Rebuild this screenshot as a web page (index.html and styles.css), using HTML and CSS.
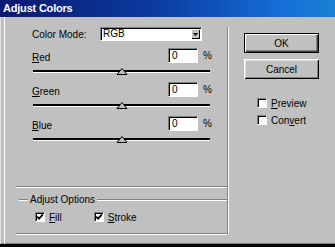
FILE: index.html
```html
<!DOCTYPE html>
<html>
<head>
<meta charset="utf-8">
<link rel="stylesheet" href="styles.css">
</head>
<body>
<div class="window">
  <div class="titlebar">Adjust Colors</div>
  <div class="client">
    <div class="left">
      <div class="adjust">
        <div class="mode-row">
          <span class="mode-label">Color Mode:</span>
          <div class="select"><span class="select-text">RGB</span><span class="drop"><svg width="5" height="3" viewBox="0 0 5 3"><polygon points="0,0 5,0 2.5,3" fill="#000"/></svg></span></div>
        </div>
        <div class="channel">
          <div class="ch-head"><span class="ch-label"><u>R</u>ed</span><span class="field">0</span><span class="pct">%</span></div>
          <div class="track"><svg class="thumb" width="11" height="7" viewBox="0 0 11 7"><polygon points="5.5,0.5 10.5,6.5 0.5,6.5" fill="#c0c0c0" stroke="#000" stroke-width="1"/></svg></div>
        </div>
        <div class="channel">
          <div class="ch-head"><span class="ch-label"><u>G</u>reen</span><span class="field">0</span><span class="pct">%</span></div>
          <div class="track"><svg class="thumb" width="11" height="7" viewBox="0 0 11 7"><polygon points="5.5,0.5 10.5,6.5 0.5,6.5" fill="#c0c0c0" stroke="#000" stroke-width="1"/></svg></div>
        </div>
        <div class="channel">
          <div class="ch-head"><span class="ch-label"><u>B</u>lue</span><span class="field">0</span><span class="pct">%</span></div>
          <div class="track"><svg class="thumb" width="11" height="7" viewBox="0 0 11 7"><polygon points="5.5,0.5 10.5,6.5 0.5,6.5" fill="#c0c0c0" stroke="#000" stroke-width="1"/></svg></div>
        </div>
      </div>
      <div class="opt-head"><span class="legend">Adjust Options</span></div>
      <div class="opt-body">
        <label class="check"><span class="box"><svg width="8" height="8" viewBox="0 0 8 8"><path d="M1.2 3.6 L3.1 5.6 L6.9 1.4" fill="none" stroke="#000" stroke-width="1.8"/></svg></span><span><u>F</u>ill</span></label>
        <label class="check"><span class="box"><svg width="8" height="8" viewBox="0 0 8 8"><path d="M1.2 3.6 L3.1 5.6 L6.9 1.4" fill="none" stroke="#000" stroke-width="1.8"/></svg></span><span><u>S</u>troke</span></label>
      </div>
    </div>
    <div class="right">
      <div class="btn btn-default">OK</div>
      <div class="btn">Cancel</div>
      <div class="checks">
        <label class="check"><span class="box"></span><span><u>P</u>review</span></label>
        <label class="check"><span class="box"></span><span>Con<u>v</u>ert</span></label>
      </div>
    </div>
  </div>
</div>
</body>
</html>
```

FILE: styles.css
```css
html, body {
  margin: 0;
  padding: 0;
  background: #c0c0c0;
}
body {
  font-family: "Liberation Sans", Arial, sans-serif;
  font-size: 10px;
  color: #000;
}
.window {
  width: 335px;
  height: 247px;
  box-sizing: border-box;
  background: #c0c0c0;
  border-bottom: 3px solid #000;
  box-shadow: inset 1px 0 #e0e0e0, inset 0 -1px #808080;
  display: flex;
  flex-direction: column;
  overflow: hidden;
}
.titlebar {
  height: 17px;
  line-height: 17px;
  padding-left: 3px;
  background: linear-gradient(to right, #08186e 0%, #0c3aa0 45%, #1470d8 85%, #1a80d4 100%);
  color: #fff;
  font-weight: bold;
  font-size: 11px;
  letter-spacing: -0.2px;
  flex: none;
}
.client {
  flex: 1;
  display: flex;
  align-items: flex-start;
  margin-left: 4px;
  border-left: 1px solid #fff;
  padding-top: 10px;
  padding-left: 11px;
}
.left {
  width: 212px;
  box-sizing: border-box;
  border-right: 1px solid #808080;
  box-shadow: 1px 0 #fff;
  flex: none;
}
.adjust {
  height: 160px;
  box-sizing: border-box;
  border-bottom: 1px solid #808080;
  box-shadow: 0 1px #fff;
  padding-left: 16px;
}
.mode-row {
  display: flex;
  align-items: center;
  height: 14px;
}
.mode-label {
  width: 68px;
  flex: none;
}
.select {
  width: 102px;
  height: 14px;
  box-sizing: border-box;
  background: #fff;
  border: 1px solid;
  border-color: #808080 #fff #fff #808080;
  box-shadow: inset 1px 1px #000;
  display: flex;
  align-items: center;
  padding-left: 2px;
  padding-right: 1px;
}
.select-text {
  flex: 1;
  line-height: 12px;
}
.drop {
  width: 9px;
  height: 10px;
  box-sizing: border-box;
  background: #c0c0c0;
  box-shadow: inset 1px 1px #fff, inset -1px -1px #000;
  display: flex;
  align-items: center;
  justify-content: center;
}
.drop svg { display: block; }
.channel {
  padding-top: 7px;
  padding-bottom: 3px;
}
.ch-head {
  display: flex;
  align-items: flex-end;
  height: 15px;
}
.ch-label {
  width: 136px;
  flex: none;
  line-height: 11px;
}
.field {
  width: 30px;
  height: 15px;
  box-sizing: border-box;
  background: #fff;
  border: 1px solid;
  border-color: #808080 #fff #fff #808080;
  box-shadow: inset 1px 1px #000;
  padding-left: 3px;
  line-height: 13px;
  flex: none;
}
.pct {
  margin-left: 5px;
  align-self: center;
}
.track {
  position: relative;
  margin-top: 7px;
  margin-left: 1px;
  width: 177px;
  height: 2px;
  background: #000;
  box-shadow: 0 1px #fff;
}
.thumb {
  position: absolute;
  left: 50%;
  top: -2px;
  transform: translateX(-50%);
  display: block;
}
.opt-head {
  display: flex;
  align-items: center;
  height: 12px;
  margin-top: 7px;
}
.opt-head::before,
.opt-head::after {
  content: "";
  height: 0;
  border-top: 1px solid #808080;
  border-bottom: 1px solid #fff;
}
.opt-head::before {
  width: 9px;
  margin-left: 3px;
}
.opt-head::after {
  flex: 1;
}
.legend {
  padding: 0 2px;
  line-height: 12px;
}
.opt-body {
  height: 28px;
  box-sizing: border-box;
  border-bottom: 1px solid #808080;
  box-shadow: 0 1px #fff;
  padding-top: 5px;
  padding-left: 19px;
  display: flex;
  gap: 32px;
}
.check {
  display: flex;
  align-items: center;
  gap: 4px;
  height: 12px;
}
.box {
  width: 10px;
  height: 10px;
  box-sizing: border-box;
  background: #fff;
  border: 1px solid;
  border-color: #808080 #fff #fff #808080;
  box-shadow: inset 1px 1px #000;
  display: flex;
  align-items: center;
  justify-content: center;
  flex: none;
}
.box svg { display: block; }
.right {
  margin-left: 16px;
  width: 75px;
  padding-top: 6px;
  flex: none;
}
.btn {
  height: 20px;
  box-sizing: border-box;
  display: flex;
  align-items: center;
  justify-content: center;
  background: #c0c0c0;
  box-shadow: inset 1px 1px #fff, inset -1px -1px #000, inset 2px 2px #dfdfdf, inset -2px -2px #808080;
}
.btn + .btn {
  margin-top: 6px;
}
.btn-default {
  border: 1px solid #000;
  box-shadow: inset 1px 1px #fff, inset -1px -1px #404040, inset -2px -2px #808080;
}
.checks {
  margin-top: 18px;
  padding-left: 13px;
  display: flex;
  flex-direction: column;
  gap: 5px;
}
```
